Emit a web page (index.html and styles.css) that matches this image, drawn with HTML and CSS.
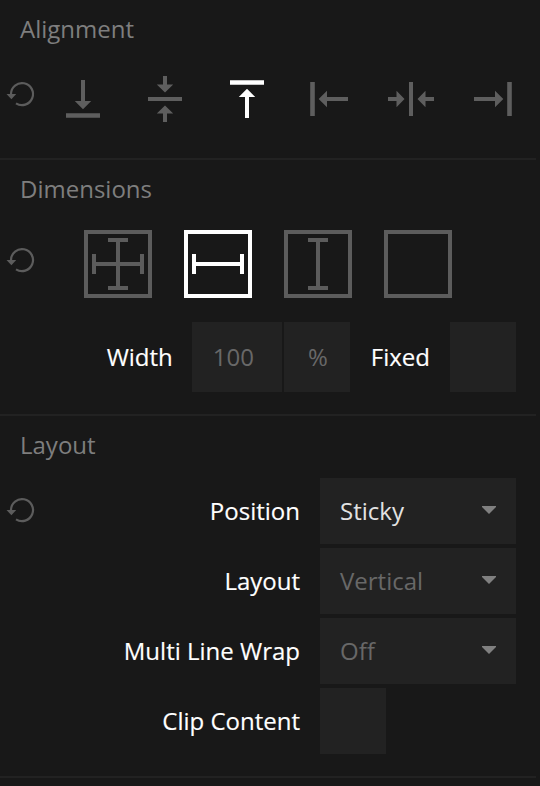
FILE: index.html
```html
<!DOCTYPE html>
<html lang="en">
<head>
<meta charset="utf-8">
<title>Inspector</title>
<link rel="stylesheet" href="styles.css">
</head>
<body>
<svg class="defs" width="0" height="0">
  <symbol id="reset" viewBox="0 0 32 28">
    <path d="M5 14.8V14a11 11 0 1 1 5 9.3" fill="none" stroke="currentColor" stroke-width="2.2"/>
    <path d="M.5 14h9.700l-4.800 5.200z" fill="currentColor"/>
  </symbol>
</svg>
<main class="panel">
  <section class="section alignment">
    <h2>Alignment</h2>
    <div class="row">
      <svg class="reset"><use href="#reset"/></svg>
      <div class="aligns">
        <svg viewBox="0 0 48 48"><path d="M22 5h4v21h6.2L24 34.3 15.8 26H22zM7 38.2h34v4.6H7z"/></svg>
        <svg viewBox="0 0 48 48"><path d="M22 1h4v8.5h6.2L24 17.5 15.8 9.5H22zM7 22h34v4H7zM22 47h4v-8.5h6.2L24 30.5l-8.2 8H22z"/></svg>
        <svg class="on" viewBox="0 0 48 48"><path d="M22 43h4V22h6.2L24 13.7 15.8 22H22zM7 5.2h34v4.6H7z"/></svg>
        <svg viewBox="0 0 48 48"><path d="M43 22v4H22v6.2L13.7 24l8.3-8.2V22zM5.2 7v34h4.6V7z"/></svg>
        <svg viewBox="0 0 48 48"><path d="M1 22v4h8.500v6.200L17.500 24 9.500 15.800V22zM22 7v34h4V7zM47 22v4h-8.500v6.200L30.500 24l8-8.200V22z"/></svg>
        <svg viewBox="0 0 48 48"><path d="M5 22v4h21v6.200L34.300 24 26 15.800V22zM38.200 7v34h4.600V7z"/></svg>
      </div>
    </div>
  </section>

  <section class="section dimensions">
    <h2>Dimensions</h2>
    <div class="row">
      <svg class="reset"><use href="#reset"/></svg>
      <div class="sizes">
        <svg viewBox="0 0 68 68"><path d="M2 2h64v64H2zM10 24v20M58 24v20M10 34h48M24 10h20M24 58h20M34 10v48"/></svg>
        <svg class="on" viewBox="0 0 68 68"><path d="M2 2h64v64H2zM10 24v20M58 24v20M10 34h48"/></svg>
        <svg viewBox="0 0 68 68"><path d="M2 2h64v64H2zM24 10h20M24 58h20M34 10v48"/></svg>
        <svg viewBox="0 0 68 68"><path d="M2 2h64v64H2z"/></svg>
      </div>
    </div>
    <div class="width-row">
      <span class="label">Width</span>
      <span class="field value">100</span>
      <span class="field unit">%</span>
      <span class="label fixed">Fixed</span>
      <span class="field check"></span>
    </div>
  </section>

  <section class="section layout">
    <h2>Layout</h2>
    <div class="row">
      <svg class="reset"><use href="#reset"/></svg>
      <div class="options">
        <span class="label">Position</span>
        <span class="field select set">Sticky<svg class="caret" viewBox="0 0 16 8"><path d="M1 0h14v1L8 8 1 1z"/></svg></span>
        <span class="label">Layout</span>
        <span class="field select">Vertical<svg class="caret" viewBox="0 0 16 8"><path d="M1 0h14v1L8 8 1 1z"/></svg></span>
        <span class="label">Multi Line Wrap</span>
        <span class="field select">Off<svg class="caret" viewBox="0 0 16 8"><path d="M1 0h14v1L8 8 1 1z"/></svg></span>
        <span class="label">Clip Content</span>
        <span class="field box"></span>
      </div>
    </div>
  </section>
</main>
</body>
</html>
```
FILE: styles.css
```css
* { box-sizing: border-box; }

body {
  margin: 0;
  height: 786px;
  overflow: hidden;
  background: #181818;
  color: #fff;
  font: 24px/34px "Open Sans", sans-serif;
}

.defs { display: block; }

.panel { width: 536px; }

.section { border-bottom: 2px solid #222; }

.alignment { height: 160px; }
.dimensions { height: 256px; }
.layout { height: 362px; }

h2 {
  margin: 0;
  padding: 12px 20px 0;
  font-size: 24px;
  font-weight: 400;
  line-height: 34px;
  color: #7e7e7e;
}

.row {
  display: flex;
  align-items: flex-start;
  padding-left: 6px;
}

.reset {
  flex: none;
  width: 32px;
  height: 28px;
  color: #5c5c5c;
}

.alignment .reset { margin-top: 34px; }
.dimensions .reset { margin-top: 40px; }
.layout .reset { margin-top: 34px; }

.aligns {
  display: grid;
  grid-template-columns: repeat(6, 82px);
  justify-items: center;
  margin: 29px 0 0 4px;
}

.aligns svg {
  width: 48px;
  height: 48px;
  fill: #5e5e5e;
}

.aligns .on { fill: #fff; }

.sizes {
  display: flex;
  gap: 32px;
  margin: 24px 0 0 46px;
}

.sizes svg {
  width: 68px;
  height: 68px;
  fill: none;
  stroke: #5c5c5c;
  stroke-width: 4;
}

.sizes .on { stroke: #fff; }

.width-row {
  display: flex;
  align-items: center;
  justify-content: flex-end;
  margin-top: 24px;
  padding-right: 20px;
}

.label { -webkit-text-stroke: 0.15px #fff; }

.field {
  display: flex;
  align-items: center;
  height: 66px;
  background: #222;
  color: #686868;
}

.width-row .field { height: 70px; }

.value {
  width: 90px;
  margin-left: 19px;
  padding-left: 21px;
}

.unit {
  justify-content: center;
  width: 66px;
  margin-left: 2px;
  padding-left: 2px;
}

.fixed { margin: 0 20px 0 21px; }

.check { width: 66px; }

.options {
  display: grid;
  grid-template-columns: 262px 196px;
  column-gap: 20px;
  row-gap: 4px;
  align-items: center;
  margin-top: 16px;
}

.options .label { text-align: right; }

.select {
  justify-content: space-between;
  padding: 0 19px 0 20px;
}

.set { color: #e2e2e2; }

.caret {
  width: 16px;
  height: 8px;
  margin-top: -3px;
  fill: #808080;
}

.box { width: 66px; }
```
